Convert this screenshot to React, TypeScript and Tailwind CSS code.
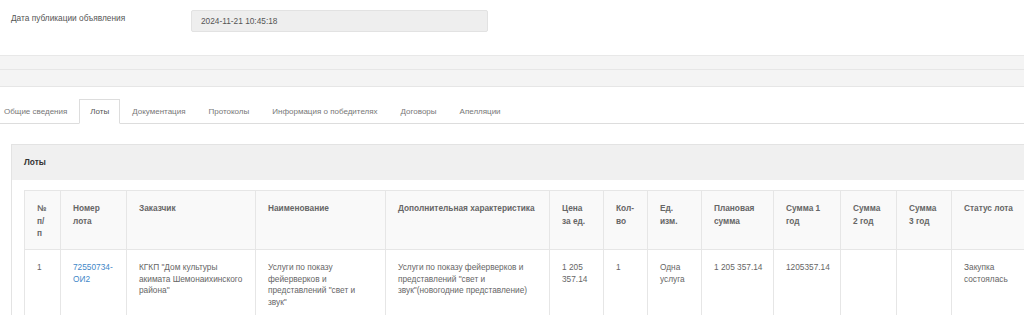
import React from "react";

const tabs = [
  "Общие сведения",
  "Лоты",
  "Документация",
  "Протоколы",
  "Информация о победителях",
  "Договоры",
  "Апелляции",
];

// header lines are split as they wrap on the original page
const columns: { title: string[]; width: string }[] = [
  { title: ["№", "п/", "п"], width: "w-[36px]" },
  { title: ["Номер", "лота"], width: "w-[66px]" },
  { title: ["Заказчик"], width: "w-[129px]" },
  { title: ["Наименование"], width: "w-[130px]" },
  { title: ["Дополнительная характеристика"], width: "w-[164px]" },
  { title: ["Цена", "за ед."], width: "w-[54px]" },
  { title: ["Кол-", "во"], width: "w-[44px]" },
  { title: ["Ед.", "изм."], width: "w-[54px]" },
  { title: ["Плановая", "сумма"], width: "w-[72px]" },
  { title: ["Сумма 1", "год"], width: "w-[67px]" },
  { title: ["Сумма", "2 год"], width: "w-[56px]" },
  { title: ["Сумма", "3 год"], width: "w-[55px]" },
  { title: ["Статус лота"], width: "w-[80px]" },
];

const row: string[][] = [
  ["1"],
  ["72550734-", "ОИ2"],
  ['КГКП "Дом культуры', "акимата Шемонаихинского", 'района"'],
  ["Услуги по показу", "фейерверков и", 'представлений "свет и', 'звук"'],
  [
    "Услуги по показу фейерверков и",
    'представлений "свет и',
    'звук"(новогодние представление)',
  ],
  ["1 205", "357.14"],
  ["1"],
  ["Одна", "услуга"],
  ["1 205 357.14"],
  ["1205357.14"],
  [],
  [],
  ["Закупка", "состоялась"],
];

export default function App() {
  return (
    <div className="w-full h-[315px] overflow-hidden bg-white font-['Liberation_Sans',Arial,sans-serif] text-[8.3px] text-[#555]">
      {/* date row */}
      <div className="flex items-start pt-[10px] pl-[11px]">
        <div className="w-[180px] pt-[2px] leading-[12px] text-[#555]">
          Дата публикации объявления
        </div>
        <div className="w-[297px] h-[22px] flex items-center px-[9px] bg-[#eeeeee] border border-[#e2e2e2] rounded-[2px] text-[#555]">
          2024-11-21 10:45:18
        </div>
      </div>

      {/* empty bars */}
      <div className="mt-[23px] border-t border-[#e8e8e8]">
        <div className="h-[14px] bg-[#f4f4f4] border-b border-[#e6e6e6]" />
        <div className="h-[17px] bg-[#f4f4f4] border-b border-[#e6e6e6]" />
      </div>

      {/* tabs */}
      <div className="mt-[12px] flex border-b border-[#dddddd] -ml-[7px] w-[calc(100%+7px)] text-[8px]">
        {tabs.map((tab) => (
          <div
            key={tab}
            className={`h-[25px] px-[10px] mr-[1px] flex items-center -mb-[1px] ${
              tab === "Лоты"
                ? "bg-white border border-[#dddddd] border-b-white text-[#555]"
                : "border border-transparent text-[#777]"
            }`}
          >
            {tab}
          </div>
        ))}
      </div>

      {/* lots panel */}
      <div className="mt-[20px] ml-[11px] w-[1100px] border-l border-t border-[#e3e3e3]">
        <div className="h-[35px] bg-[#f0f0f0] flex items-center pl-[12px] font-bold text-[#333]">
          Лоты
        </div>
        <div className="pt-[10px] pl-[12px] pb-[20px]">
          <table className="table-fixed border-collapse w-[1003px]">
            <colgroup>
              {columns.map((c) => (
                <col key={c.title.join(" ")} className={c.width} />
              ))}
            </colgroup>
            <thead>
              <tr className="bg-[#f9f9f9]">
                {columns.map((c) => (
                  <th
                    key={c.title.join(" ")}
                    className="h-[59px] align-top text-left font-bold text-[#666] leading-[12.5px] pt-[11px] pl-[12px] pr-[4px] border border-[#e6e6e6]"
                  >
                    {c.title.map((line) => (
                      <span key={line} className="block whitespace-nowrap">
                        {line}
                      </span>
                    ))}
                  </th>
                ))}
              </tr>
            </thead>
            <tbody>
              <tr>
                {row.map((cell, i) => (
                  <td
                    key={i}
                    className={`h-[90px] align-top pt-[12px] pl-[12px] pr-[4px] leading-[11.5px] border border-[#e6e6e6] ${
                      i === 1 ? "text-[#3f87c8]" : "text-[#666]"
                    }`}
                  >
                    {cell.map((line) => (
                      <span key={line} className="block whitespace-nowrap">
                        {line}
                      </span>
                    ))}
                  </td>
                ))}
              </tr>
            </tbody>
          </table>
        </div>
      </div>
    </div>
  );
}
